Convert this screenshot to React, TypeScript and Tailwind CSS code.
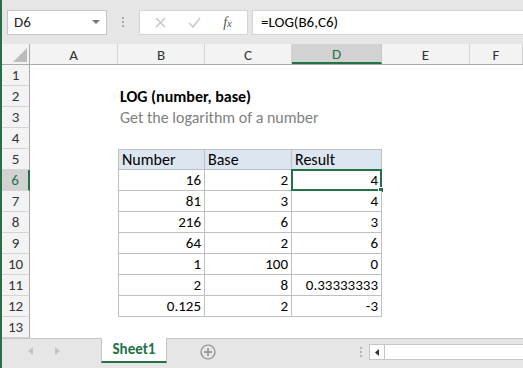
import React from "react";

const font = { fontFamily: "Carlito, Lato, 'Liberation Sans', sans-serif" };

const colWidths = ["w-[88px]", "w-[87px]", "w-[87px]", "w-[90px]", "w-[88px]", "flex-1"];
const colNames = ["A", "B", "C", "D", "E", "F"];

type Cell = { v: string; align?: "left" | "right" };

const tableRows: Cell[][] = [
  [{ v: "Number", align: "left" }, { v: "Base", align: "left" }, { v: "Result", align: "left" }],
  [{ v: "16" }, { v: "2" }, { v: "4" }],
  [{ v: "81" }, { v: "3" }, { v: "4" }],
  [{ v: "216" }, { v: "6" }, { v: "3" }],
  [{ v: "64" }, { v: "2" }, { v: "6" }],
  [{ v: "1" }, { v: "100" }, { v: "0" }],
  [{ v: "2" }, { v: "8" }, { v: "0.33333333" }],
  [{ v: "0.125" }, { v: "2" }, { v: "-3" }],
];

function RowHeader({ n }: { n: number }) {
  const active = n === 6;
  return (
    <div
      className={
        active
          ? "w-[28px] h-full shrink-0 bg-[#d2d2d2] border-r-2 border-r-[#217346] border-b border-b-[#d4d4d4] text-[#217346] flex items-center justify-center text-[15px]"
          : "w-[28px] h-full shrink-0 bg-[#f3f3f3] border-r border-r-[#ababab] border-b border-b-[#d4d4d4] text-[#333] flex items-center justify-center text-[15px]"
      }
    >
      {n}
    </div>
  );
}

function TableCell({ cell, col, row }: { cell: Cell; col: number; row: number }) {
  const header = row === 0;
  const selected = row === 1 && col === 2;
  return (
    <div
      className={
        (col === 0 ? "w-[87px] border-l " : col === 1 ? "w-[87px] " : "w-[90px] ") +
        (header ? "bg-[#dce6f1] border-t text-[16px] " : "bg-white text-[15px] ") +
        "h-full shrink-0 relative border-r border-b border-[#bfbfbf] px-[3px] flex items-center text-black " +
        (cell.align === "left" ? "justify-start" : "justify-end")
      }
    >
      {selected && (
        <div className="absolute -left-px -top-px -right-px -bottom-px border-2 border-[#217346]">
          <div className="absolute -right-[4px] -bottom-[4px] w-[6px] h-[6px] bg-[#217346] border border-white" />
        </div>
      )}
      <span className="relative">{cell.v}</span>
    </div>
  );
}

function SheetRow({ n }: { n: number }) {
  const tr = n >= 5 && n <= 12 ? tableRows[n - 5] : null;
  return (
    <div className="flex h-[21px]">
      <RowHeader n={n} />
      <div className="w-[88px] shrink-0" />
      {tr ? (
        tr.map((c, i) => <TableCell key={i} cell={c} col={i} row={n - 5} />)
      ) : (
        <div className="w-[264px] shrink-0 flex items-center px-[2px] text-[16px]">
          {n === 2 && <span className="font-bold text-black">LOG (number, base)</span>}
          {n === 3 && <span className="text-[#7f7f7f] whitespace-nowrap">Get the logarithm of a number</span>}
        </div>
      )}
      <div className="flex-1" />
    </div>
  );
}

export default function App() {
  return (
    <div className="w-[523px] h-[368px] overflow-hidden flex flex-col bg-white border-l-2 border-[#217346] select-none" style={font}>
      {/* formula bar */}
      <div className="h-[44px] shrink-0 bg-[#e6e6e6] flex items-center pl-[5px] gap-0">
        <div className="w-[100px] h-[25px] bg-white border border-[#c6c6c6] flex items-center justify-between pl-[6px] pr-[6px] text-[15px] text-[#222]">
          <span>D6</span>
          <svg width="8" height="5" viewBox="0 0 8 5"><path d="M0 0h8L4 4z" fill="#777" /></svg>
        </div>
        <div className="w-[32px] flex flex-col items-center gap-[2px]">
          <span className="w-[2px] h-[2px] bg-[#aaa]" />
          <span className="w-[2px] h-[2px] bg-[#aaa]" />
          <span className="w-[2px] h-[2px] bg-[#aaa]" />
        </div>
        <div className="w-[109px] h-[25px] bg-white border border-[#d4d4d4] flex items-center justify-around px-[4px]">
          <svg width="11" height="11" viewBox="0 0 11 11"><path d="M1 1l9 9M10 1l-9 9" stroke="#c8c8c8" strokeWidth="1.5" /></svg>
          <svg width="13" height="11" viewBox="0 0 13 11"><path d="M1 6l4 4 7-9" stroke="#c8c8c8" strokeWidth="1.5" fill="none" /></svg>
          <span className="italic text-[14px] text-[#555]" style={{ fontFamily: "'Liberation Serif', serif" }}>
            f<span className="text-[11px]">x</span>
          </span>
        </div>
        <div className="ml-[4px] flex-1 h-[25px] bg-white border border-[#d4d4d4] border-r-0 flex items-center pl-[8px] text-[15px] text-black">
          =LOG(B6,C6)
        </div>
      </div>

      {/* column headers */}
      <div className="h-[21px] shrink-0 flex bg-[#f3f3f3] border-b border-[#ababab]">
        <div className="w-[28px] h-full shrink-0 border-r border-[#ababab] flex items-end justify-end p-[2px]">
          <svg width="14" height="14" viewBox="0 0 14 14"><path d="M14 0v14H0z" fill="#bcbcbc" /></svg>
        </div>
        {colNames.map((c, i) => (
          <div
            key={c}
            className={
              colWidths[i] +
              (c === "D"
                ? " shrink-0 h-full bg-[#d2d2d2] border-b-2 border-[#217346] border-r border-r-[#c6c6c6] text-[#217346]"
                : " shrink-0 h-full border-r border-[#d4d4d4] text-[#333]") +
              " flex items-center justify-center pt-[2px] text-[15px]"
            }
          >
            {c}
          </div>
        ))}
      </div>

      {/* rows */}
      <div className="flex-1 flex flex-col">
        {Array.from({ length: 13 }, (_, i) => (
          <SheetRow key={i} n={i + 1} />
        ))}
      </div>

      {/* sheet tabs */}
      <div className="h-[30px] shrink-0 bg-[#e6e6e6] border-t border-[#c6c6c6] flex items-start">
        <div className="w-[99px] h-[24px] flex items-center gap-[20px] pl-[26px]">
          <svg width="6" height="8" viewBox="0 0 6 8"><path d="M5 0v8L0 4z" fill="#c4c4c4" /></svg>
          <svg width="6" height="8" viewBox="0 0 6 8"><path d="M1 0v8l5-4z" fill="#c4c4c4" /></svg>
        </div>
        <div className="w-[66px] h-[25px] -mt-px bg-white border-x border-[#c6c6c6] border-b-2 border-b-[#217346] flex items-center justify-center font-bold text-[15px] text-[#217346]">
          Sheet1
        </div>
        <div className="w-[82px] h-[25px] flex items-center justify-center">
          <svg width="16" height="16" viewBox="0 0 16 16">
            <circle cx="8" cy="8" r="7" fill="none" stroke="#8a8a8a" strokeWidth="1.2" />
            <path d="M8 4v8M4 8h8" stroke="#8a8a8a" strokeWidth="1.4" />
          </svg>
        </div>
        <div className="flex-1" />
        <div className="w-[16px] h-[25px] flex flex-col items-center justify-center gap-[2px]">
          <span className="w-[2px] h-[2px] bg-[#b5b5b5]" />
          <span className="w-[2px] h-[2px] bg-[#b5b5b5]" />
          <span className="w-[2px] h-[2px] bg-[#b5b5b5]" />
        </div>
        <div className="w-[154px] h-[16px] mt-[5px] bg-white border border-[#c6c6c6] border-r-0 flex">
          <div className="w-[15px] h-full border-r border-[#c6c6c6] flex items-center justify-center">
            <svg width="4" height="7" viewBox="0 0 4 7"><path d="M4 0v7L0 3.5z" fill="#333" /></svg>
          </div>
        </div>
      </div>
    </div>
  );
}
